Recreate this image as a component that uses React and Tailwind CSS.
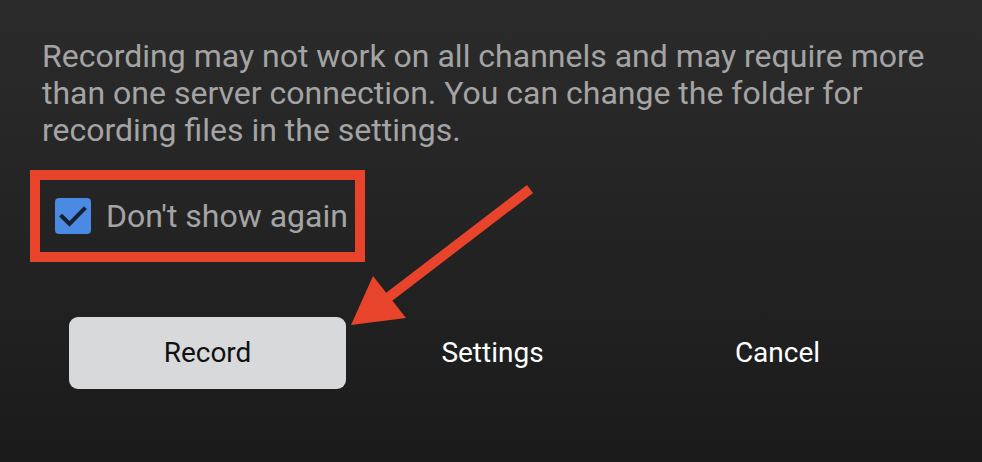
import React from "react";

const Check = () => (
    <svg viewBox="0 0 36 36" className="w-[36px] h-[36px]">
        <rect x="0" y="0" width="36" height="36" rx="4" fill="#4a8ae2" />
        <path d="M7 18.5 L14.5 26 L29 11" fill="none" stroke="#17202e" strokeWidth="4" strokeLinecap="square" />
    </svg>
);

const Arrow = () => (
    <svg className="absolute left-0 top-0 pointer-events-none" width="982" height="462" viewBox="0 0 982 462">
        <line x1="530" y1="189" x2="385" y2="300" stroke="#e8432b" strokeWidth="10" />
        <polygon points="351,325 373,276 406,318" fill="#e8432b" />
    </svg>
);

export default function App() {
    return (
        <div className="relative w-[982px] h-[462px] overflow-hidden bg-[linear-gradient(180deg,#2b2b2b_0%,#242424_45%,#1b1b1b_100%)] font-['Roboto',sans-serif]">
            <div className="pt-[38px] pl-[42px] pr-[40px]">
                <p className="text-[32px] leading-[37px] text-[#a4a4a4]">
                    Recording may not work on all channels and may require more than one server connection. You can change the folder for recording files in the settings.
                </p>
                <div className="mt-[21px] ml-[-12px] inline-flex items-center gap-[15px] border-[10px] border-[#e8432b] w-[335px] h-[92px] pl-[15px]">
                    <Check />
                    <span className="text-[32px] text-[#a4a4a4]">Don't show again</span>
                </div>
            </div>
            <div className="mt-[55px] ml-[69px] mr-[66px] grid grid-cols-3 gap-[8px] items-center">
                <button className="h-[72px] w-[277px] rounded-[9px] bg-[#d8d9db] text-[28px] text-[#111]">Record</button>
                <button className="h-[72px] text-[28px] text-white">Settings</button>
                <button className="h-[72px] text-[28px] text-white">Cancel</button>
            </div>
            <Arrow />
        </div>
    );
}
